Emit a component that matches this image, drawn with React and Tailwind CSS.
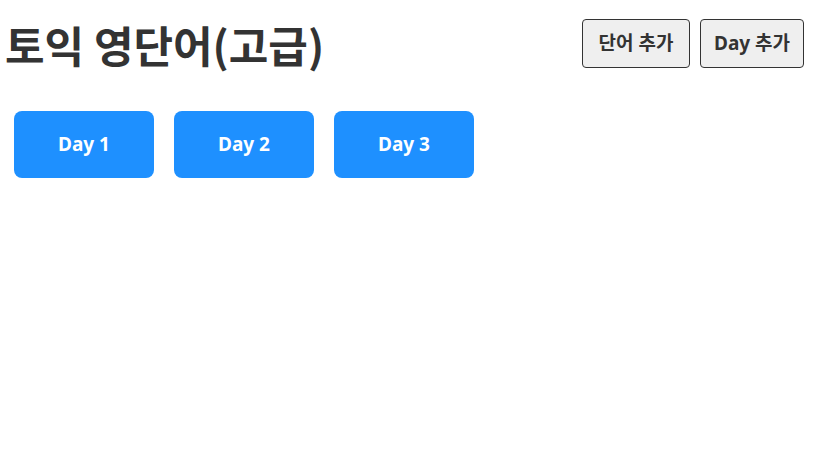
export default function App() {
  const days = [1, 2, 3];

  return (
    <div
      className="w-[830px] h-[473px] bg-white text-[#333]"
      style={{ fontFamily: '"Noto Sans", "Noto Sans CJK KR", sans-serif' }}
    >
      <div className="flex items-start justify-between pl-[5px] pr-[26px] pt-[19px]">
        <h1
          className="text-[43px] font-bold leading-[56px] mt-[-3px]"
          style={{ fontFamily: '"Noto Sans CJK KR", sans-serif' }}
        >
          토익 영단어(고급)
        </h1>
        <div className="flex gap-[10px]">
          <button className="h-[49px] w-[108px] border border-[#333] rounded-[4px] bg-[#efefef] text-[19px] font-bold">
            단어 추가
          </button>
          <button className="h-[49px] w-[104px] border border-[#333] rounded-[4px] bg-[#efefef] text-[19px] font-bold">
            Day 추가
          </button>
        </div>
      </div>

      <ul className="flex gap-[20px] pl-[14px] mt-[39px]">
        {days.map((d) => (
          <li key={d}>
            <a className="flex items-center justify-center w-[140px] h-[67px] rounded-[8px] bg-[#1e90ff] text-white text-[19px] font-bold">
              Day {d}
            </a>
          </li>
        ))}
      </ul>
    </div>
  );
}
